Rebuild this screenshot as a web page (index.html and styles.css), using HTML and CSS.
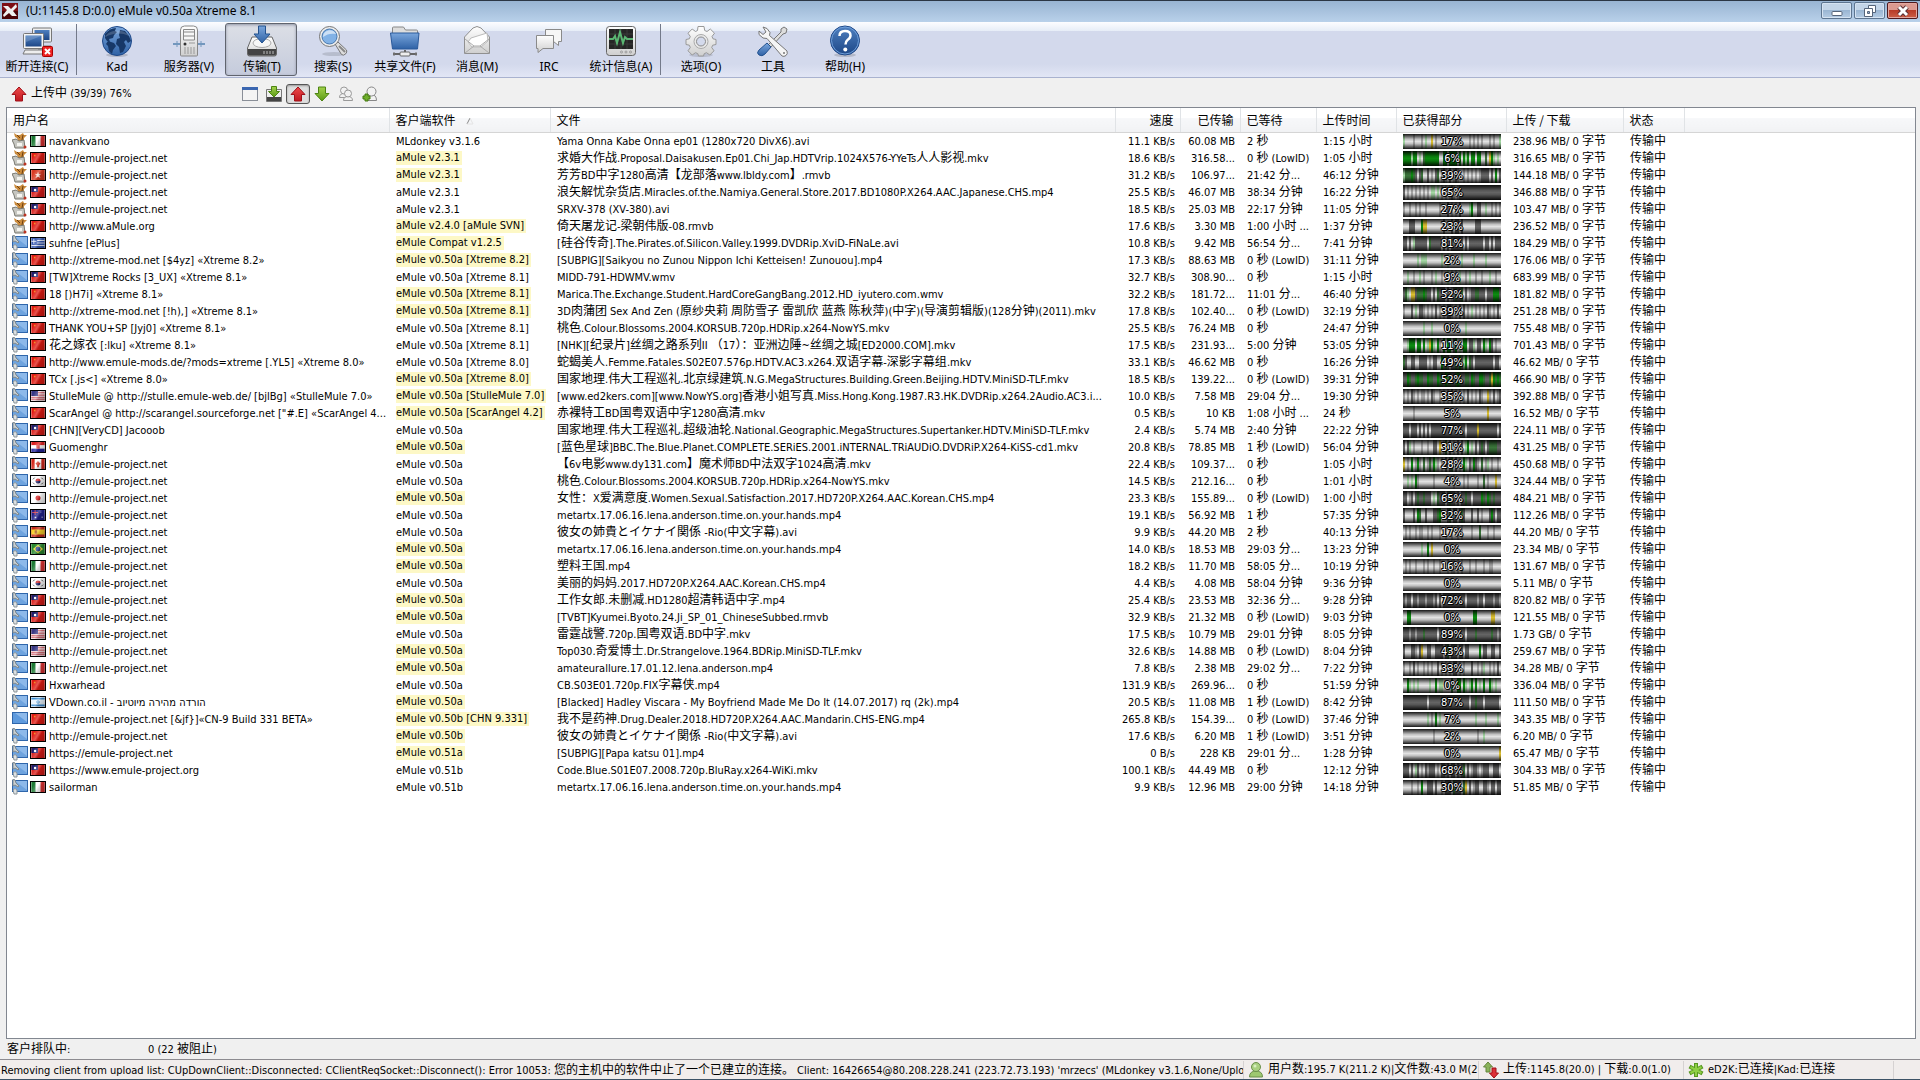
FILE: index.html
```html
<!DOCTYPE html>
<html lang="zh-CN">
<head>
    <meta charset="UTF-8">
    <meta name="viewport" content="width=device-width, initial-scale=1.0">
    <title>eMule v0.50a Xtreme 8.1</title>
    <link rel="stylesheet" href="styles.css">
</head>
<body>

    <svg class="sprite" width="0" height="0" aria-hidden="true">
        <defs>
            <linearGradient id="blue" x1="0" y1="0" x2="0" y2="1"><stop offset="0" stop-color="#7aa6dc"/><stop offset="1" stop-color="#2f62a6"/></linearGradient>
            <linearGradient id="deep" x1="0" y1="0" x2="0" y2="1"><stop offset="0" stop-color="#4f80c0"/><stop offset="1" stop-color="#1d4787"/></linearGradient>
            <linearGradient id="grey" x1="0" y1="0" x2="0" y2="1"><stop offset="0" stop-color="#ffffff"/><stop offset="1" stop-color="#cfcfcf"/></linearGradient>
            <linearGradient id="green" x1="0" y1="0" x2="0" y2="1"><stop offset="0" stop-color="#a3d24c"/><stop offset="1" stop-color="#5a9a14"/></linearGradient>
            <linearGradient id="red" x1="0" y1="0" x2="0" y2="1"><stop offset="0" stop-color="#ee4a4a"/><stop offset="1" stop-color="#c01820"/></linearGradient>
        </defs>

        <symbol id="i-disconnect" viewBox="0 0 32 32">
            <path d="M12 21h18l1 3H11z" fill="#ddd" stroke="#777"/>
            <rect x="11.500" y="3" width="19" height="14" rx="1" fill="#eee" stroke="#777"/>
            <rect x="13.500" y="5" width="15" height="10" fill="url(#deep)"/>
            <path d="M4 25h18l2 4H2z" fill="#eee" stroke="#777"/>
            <path d="M9 22h8v3H9z" fill="#aaa"/>
            <rect x="2.500" y="8.500" width="20" height="15" rx="1" fill="#f4f4f4" stroke="#777"/>
            <rect x="4.500" y="10.500" width="16" height="11" fill="url(#deep)"/>
            <path d="M5 11h15L5 17z" fill="#fff" opacity=".18"/>
            <rect x="21.500" y="21.500" width="10" height="10" rx="1" fill="#e22" stroke="#a00"/>
            <path d="M24 24l5 5m0-5l-5 5" stroke="#fff" stroke-width="2"/>
        </symbol>
        <symbol id="i-kad" viewBox="0 0 32 32">
            <ellipse cx="16" cy="30" rx="11" ry="2" fill="#000" opacity=".15"/>
            <circle cx="16" cy="16" r="14.500" fill="url(#blue)" stroke="#1d4787"/>
            <path d="M4 9c3-4 7-6 11-6l-1 3 2 1-3 3-1 3-4 1 1 3-3-1-2-3zM7 16l6 2 2 3-3 4-1 4-3-3-1-5-2-2zM19 5l5 1 4 5 2 5-3 2-2-3-2 2 2 4-3 6-3 1-1-6-3-3 1-5 3-1-1-3z" fill="#173868"/>
            <path d="M4 12C8 4 23 3 28 11c-8-4-16-3-24 1z" fill="#fff" opacity=".18"/>
        </symbol>
        <symbol id="i-server" viewBox="0 0 32 32">
            <path d="M0 19h32" stroke="#7397bd" stroke-width="2"/>
            <path d="M4 16v6M28 16v6" stroke="#7397bd"/>
            <path d="M7.500 30V5q0-4 4-4h9q4 0 4 4v25q0 1-1 1h-15q-1 0-1-1z" fill="url(#grey)" stroke="#888"/>
            <path d="M10.500 7V4.500h11V15h-11V7h11M10.500 11h11" fill="#f6f6f6" stroke="#888"/>
            <circle cx="12" cy="19" r="1.500" fill="#333"/>
            <path d="M16 18h6M12 22v7M15 22v7M18 22v7M21 22v7" stroke="#999"/>
        </symbol>
        <symbol id="i-transfer" viewBox="0 0 32 32">
            <path d="M1.500 23L6 12h20l4.500 11v6q0 2-2 2h-25q-2 0-2-2z" fill="url(#grey)" stroke="#666"/>
            <ellipse cx="16" cy="18" rx="9" ry="4.500" fill="#f7f7f7" stroke="#aaa"/>
            <path d="M2 24h28v5q0 1.500-1.500 1.500h-25Q2 30.500 2 29z" fill="#444"/>
            <path d="M18 26v3M21 26v3M24 26v3M27 26v3" stroke="#bbb"/>
            <path d="M12.500 1h7v8h4.500l-8 9-8-9h4.500z" fill="url(#blue)" stroke="#23528f"/>
        </symbol>
        <symbol id="i-search" viewBox="0 0 32 32">
            <ellipse cx="17" cy="29" rx="12" ry="2" fill="#000" opacity=".13"/>
            <path d="M18 19l3-2 8.500 8q1 2-1 4t-4 .5z" fill="#ddd" stroke="#777"/>
            <path d="M22 21l6 6" stroke="#888" stroke-width="2"/>
            <circle cx="12.500" cy="11.500" r="10" fill="#eee" stroke="#777"/>
            <circle cx="12.500" cy="11.500" r="7.500" fill="#82b2e6" stroke="#4677ae"/>
            <path d="M6 12c0-8 11-9 13-3-5-1-9 0-13 3z" fill="#fff" opacity=".6"/>
        </symbol>
        <symbol id="i-shared" viewBox="0 0 32 32">
            <path d="M3.500 10V3q0-1 1-1h10l2 3h11q1 0 1 1v5z" fill="#ddd" stroke="#888"/>
            <path d="M1.500 8h28.500l-1.500 16h-25z" fill="url(#blue)" stroke="#2b5a9b"/>
            <path d="M4 29h24M16 25v3" stroke="#666" stroke-width="2"/>
            <rect x="11" y="27" width="10" height="4" rx="1" fill="#eee" stroke="#666"/>
            <path d="M5 27v4M27 27v4" stroke="#777"/>
        </symbol>
        <symbol id="i-mail" viewBox="0 0 32 32">
            <path d="M3.500 28.500V12L12 3q4-3 8 0l8.500 9v16.500z" fill="url(#grey)" stroke="#909090"/>
            <path d="M7 17l3-4 16-5 1 8-7 6H11z" fill="#fff" stroke="#bbb"/>
            <path d="M4 14l9 7h6l9-7M4 28l9-7M28 28l-9-7" fill="none" stroke="#aaa"/>
        </symbol>
        <symbol id="i-irc" viewBox="0 0 32 32">
            <path d="M12.500 4.500h16v12h-3v4l-5-4h-8z" fill="#f6f6f6" stroke="#8a8a8a"/>
            <path d="M3.500 10.500h17v13H10l-5 4v-4H3.500z" fill="url(#grey)" stroke="#8a8a8a"/>
        </symbol>
        <symbol id="i-stats" viewBox="0 0 32 32">
            <rect x="1.500" y="1.500" width="29" height="29" rx="3" fill="url(#grey)" stroke="#666"/>
            <rect x="4" y="4" width="24" height="20" fill="#252525"/>
            <path d="M4 9h24M4 14h24M4 19h24M10 4v20M16 4v20M22 4v20" stroke="#3b3b3b"/>
            <path d="M4 14h4l2-3 2 7 3-11 3 11 2-6 2 2h6" fill="none" stroke="#5ab572" stroke-width="2"/>
            <g fill="#ddd" stroke="#999"><circle cx="16.500" cy="27" r="1"/><circle cx="21" cy="27" r="1"/><circle cx="25.500" cy="27" r="1"/></g>
        </symbol>
        <symbol id="i-options" viewBox="0 0 32 32">
            <ellipse cx="16" cy="30" rx="12" ry="2" fill="#000" opacity=".12"/>
            <path d="M13 1.500h6l.7 4 2.300 1 3.300-2.500 4.200 4.200-2.500 3.300 1 2.300 3 .7v5l-3.300.7-1 2.300 2.300 3.300-4.200 4.200-3.300-2.300-2.300 1-.7 2.300h-5l-.7-2.300-2.300-1-3.300 2.300-4.200-4.200 2.300-3.300-1-2.300-3.300-.7v-5l3.300-.7 1-2.300L3 8.200 7.200 4l3.300 2.500 2-1z" fill="url(#grey)" stroke="#999"/>
            <circle cx="16" cy="16.500" r="7" fill="#e8e8e8" stroke="#aaa"/>
            <circle cx="16" cy="16.500" r="4.500" fill="#d4daec" stroke="#8b8b8b"/>
        </symbol>
        <symbol id="i-tools" viewBox="0 0 32 32">
            <path d="M27 2l3 2-1 4-3 1-12 13-3-2L24 7V4z" fill="#ddd" stroke="#777"/>
            <path d="M10 18l4 4-6 7q-3 3-6 1t0-5z" fill="url(#blue)" stroke="#23528f"/>
            <path d="M6 2l4 1.500 3 4-.5 3L30 26q1 3-1 4.500t-4 .5L10 13.500 6 13 2 9.500V6l4 3.500L9 7z" fill="#f5f5f5" stroke="#777"/>
            <circle cx="27" cy="28" r="1" fill="#777"/>
        </symbol>
        <symbol id="i-help" viewBox="0 0 32 32">
            <ellipse cx="16" cy="30" rx="11" ry="2" fill="#000" opacity=".15"/>
            <circle cx="16" cy="15.500" r="14.500" fill="url(#deep)" stroke="#1d4787"/>
            <circle cx="16" cy="15.500" r="13.500" fill="none" stroke="#6f9fda"/>
            <path d="M10.500 11q0-5 5.500-5t5.500 4.500q0 2.500-3 4.500-2 1.500-2 4.500" fill="none" stroke="#fff" stroke-width="2.500"/>
            <circle cx="16.300" cy="24.500" r="2" fill="#fff"/>
        </symbol>

        <symbol id="i-up" viewBox="0 0 16 16"><path d="M8 1l7 7.500h-3.500V15h-7V8.500H1z" fill="url(#red)" stroke="#a01018"/></symbol>
        <symbol id="i-down" viewBox="0 0 16 16"><path d="M8 15L1 7.500h3.500V1h7v6.500H15z" fill="url(#green)" stroke="#4d8412"/></symbol>
        <symbol id="i-window" viewBox="0 0 16 16"><rect x=".5" y="1.500" width="15" height="13" fill="#f4f4f4" stroke="#8a8f98"/><path d="M0 1h16v3H0z" fill="#3a66b0"/></symbol>
        <symbol id="i-tray" viewBox="0 0 16 16"><path d="M.5 3.500h15v12H.5z" fill="#eee" stroke="#777"/><path d="M1 11h14v4H1z" fill="#444"/><path d="M8 11L2.500 5.500h3V.5h5v5h3z" fill="url(#green)" stroke="#4d8412"/></symbol>
        <symbol id="i-people" viewBox="0 0 16 16"><g fill="#f2f2f2" stroke="#999"><path d="M1.500 11.500q0-4 4.500-4t4.500 4z"/><circle cx="6" cy="4.500" r="3.500"/><path d="M5.500 14.500q0-4 4.500-4t4.500 4z"/><circle cx="10" cy="7.500" r="3.500"/></g></symbol>
        <symbol id="i-known" viewBox="0 0 16 16"><g fill="#f2f2f2" stroke="#888"><path d="M3.500 14.500q0-6 5.500-6t5.500 6z"/><circle cx="9.500" cy="5.500" r="4.500"/></g><path d="M1 10h2V8h3v2h2v3H6v2H3v-2H1z" fill="#6fae2b" stroke="#457a10"/></symbol>
        <symbol id="i-user" viewBox="0 0 16 16"><path d="M1.500 15q0-6 6.500-6t6.500 6z" fill="#9dc870" stroke="#6b8f4b"/><circle cx="8" cy="5" r="4.500" fill="#a9d080" stroke="#6b8f4b"/><circle cx="7" cy="4" r="1.500" fill="#d8efc0"/></symbol>
        <symbol id="i-updown" viewBox="0 0 16 16"><path d="M5 0l4.500 5H7v5H3V5H.5z" fill="#8ab25a" stroke="#64863c"/><path d="M11 16l-4.500-5H9V6h4v5h2.500z" fill="#dd3038" stroke="#a01018"/></symbol>
        <symbol id="i-net" viewBox="0 0 16 16"><path d="M8 1v14M1.500 4.500l13 7M14.500 4.500l-13 7" stroke="#57971f" stroke-width="4"/><path d="M8 2v12M2.500 5l11 6M13.500 5l-11 6" stroke="#8fcf45" stroke-width="2"/></symbol>

        <symbol id="c-mule" viewBox="0 0 16 16">
            <path d="M2 0l3 2h3l3-2 1 2 3 0-3 3v3H6L5 5 3 4z" fill="#c98a3c"/>
            <path d="M5 2l3 3M11 2l-1 5" stroke="#6d3e10"/>
            <path d="M0 7l4-1 3 2 5-1 1 8H3l-1-4z" fill="#c6c6c0" stroke="#77776f"/>
            <path d="M5 10h5v3H5z" fill="#f5f5f0"/>
            <circle cx="13" cy="14" r="1.500" fill="#b32"/>
        </symbol>
        <symbol id="c-emule" viewBox="0 0 16 16">
            <rect x=".5" y="1.500" width="15" height="11" fill="#6ea3de" stroke="#2f66ab"/>
            <path d="M3 2l12 0v9z" fill="#8db9ea"/>
            <path d="M1 0l2 1 1 3 3 3-1 1-3-2-2 1z" fill="#c9d0d4" stroke="#7e888d"/>
            <path d="M1 11q2-3 4 0v4H2z" fill="#dde1e3" stroke="#8b9499"/>
        </symbol>
        <symbol id="c-plain" viewBox="0 0 16 16">
            <rect x=".5" y="1.500" width="15" height="11" fill="#5e9add" stroke="#2f66ab"/>
            <path d="M3 2l12 0v9z" fill="#8db9ea"/>
        </symbol>

        <symbol id="f-it" viewBox="0 0 16 12"><path d="M0 0h16v12H0z" fill="#fff"/><path d="M0 0h5v12H0z" fill="#1d7a34"/><path d="M11 0h5v12h-5z" fill="#d33"/></symbol>
        <symbol id="f-cn" viewBox="0 0 16 12"><path d="M0 0h16v12H0z" fill="#df1a12"/><path d="M3 2h2v2H3z" fill="#f08a20"/></symbol>
        <symbol id="f-hk" viewBox="0 0 16 12"><path d="M0 0h16v12H0z" fill="#d93a22"/><path d="M8 2l1 3 3-.5-2.500 2L11 9.500 8 8 5 9.500l1.500-3L4 4.500l3 .5z" fill="#ffe8e0"/></symbol>
        <symbol id="f-tw" viewBox="0 0 16 12"><path d="M0 0h16v12H0z" fill="#d81c18"/><path d="M0 0h8v6H0z" fill="#20206c"/><circle cx="4.500" cy="3.500" r="1.500" fill="#fff"/></symbol>
        <symbol id="f-gr" viewBox="0 0 16 12"><path d="M0 0h16v12H0z" fill="#3658b0"/><path d="M7 3h9M7 6h9M0 9h16M0 4h6M3 1v6" stroke="#fff"/></symbol>
        <symbol id="f-us" viewBox="0 0 16 12"><path d="M0 0h16v12H0z" fill="#f0d4d8"/><path d="M0 2h16M0 5h16M0 8h16M0 10h16" stroke="#c7404c"/><path d="M0 0h8v6H0z" fill="#383884"/></symbol>
        <symbol id="f-hr" viewBox="0 0 16 12"><path d="M0 0h16v4H0z" fill="#d22"/><path d="M0 4h16v4H0z" fill="#fff"/><path d="M0 8h16v4H0z" fill="#229"/><path d="M6 3h4v5H6z" fill="#d44"/></symbol>
        <symbol id="f-ca" viewBox="0 0 16 12"><path d="M0 0h16v12H0z" fill="#fff"/><path d="M0 0h4v12H0zM12 0h4v12h-4zM8 2l1 2 2 1-2 3v2H7V8L5 5l2-1z" fill="#d52b1e"/></symbol>
        <symbol id="f-kr" viewBox="0 0 16 12"><path d="M0 0h16v12H0z" fill="#fff"/><path d="M5 6a3 3 0 016 0z" fill="#c22"/><path d="M5 6a3 3 0 006 0z" fill="#226"/><path d="M2 4l2-2M12 2l2 2M2 8l2 2M12 10l2-2" stroke="#333"/></symbol>
        <symbol id="f-jp" viewBox="0 0 16 12"><path d="M0 0h16v12H0z" fill="#fff"/><circle cx="8" cy="6" r="3" fill="#d32020"/></symbol>
        <symbol id="f-au" viewBox="0 0 16 12"><path d="M0 0h16v12H0z" fill="#20208a"/><path d="M1 3h7M4.500 0v6" stroke="#e55"/><path d="M4 8h2v2H4zM11 2h1v1h-1zM12 8h2v1h-2z" fill="#dde"/></symbol>
        <symbol id="f-es" viewBox="0 0 16 12"><path d="M0 0h16v12H0z" fill="#c22b1c"/><path d="M0 3h16v6H0z" fill="#f5cf28"/><path d="M4 4h3v4H4z" fill="#a85a18"/></symbol>
        <symbol id="f-br" viewBox="0 0 16 12"><path d="M0 0h16v12H0z" fill="#2a8830"/><path d="M8 1l6 5-6 5-6-5z" fill="#f1e13a"/><circle cx="8" cy="6" r="3" fill="#24408c"/></symbol>
        <symbol id="f-il" viewBox="0 0 16 12"><path d="M0 0h16v12H0z" fill="#eaf5ff"/><path d="M0 2h16M0 10h16" stroke="#3a8bd0" stroke-width="2"/><circle cx="8" cy="6" r="1.500" fill="none" stroke="#3a8bd0"/></symbol>
    </svg>

    <header class="titlebar">
        <svg class="app-icon" viewBox="0 0 16 16" aria-hidden="true">
            <path d="M0 0h16v16H0z" fill="#7c0e14"/><path d="M0 8h16v8H0z" fill="#4c0408"/>
            <path d="M1 3l5 0 3 3 5-5 1 3-4 4 4 5h-5l-3-3-5 4-1-2 4-5z" fill="#f0f0f0"/>
        </svg>
        <h1>(U:1145.8 D:0.0) eMule v0.50a Xtreme 8.1</h1>
        <div class="window-buttons">
            <button type="button" aria-label="最小化"><svg viewBox="0 0 16 12"><rect x="3" y="6.500" width="10" height="4" rx="1" fill="#fff" stroke="#56657a"/></svg></button>
            <button type="button" aria-label="还原"><svg viewBox="0 0 16 12"><path d="M6.500.5h7v7h-7z" fill="#fff" stroke="#56657a"/><path d="M2.500 3.500h8v8h-8z" fill="#fff" stroke="#56657a"/><path d="M5.500 6.500h2v2h-2z" fill="#8cabcf" stroke="#56657a"/></svg></button>
            <button type="button" class="close" aria-label="关闭"><svg viewBox="0 0 16 12"><path d="M4 2l8 8m0-8l-8 8" stroke="#5b2f33" stroke-width="5"/><path d="M4 2l8 8m0-8l-8 8" stroke="#fff" stroke-width="3"/></svg></button>
        </div>
    </header>

    <nav class="toolbar">
        <button type="button"><svg><use href="#i-disconnect"/></svg>断开连接(C)</button>
        <span class="sep"></span>
        <button type="button"><svg><use href="#i-kad"/></svg>Kad</button>
        <button type="button"><svg><use href="#i-server"/></svg>服务器(V)</button>
        <button type="button" class="active"><svg><use href="#i-transfer"/></svg>传输(T)</button>
        <button type="button"><svg><use href="#i-search"/></svg>搜索(S)</button>
        <button type="button"><svg><use href="#i-shared"/></svg>共享文件(F)</button>
        <button type="button"><svg><use href="#i-mail"/></svg>消息(M)</button>
        <button type="button"><svg><use href="#i-irc"/></svg>IRC</button>
        <button type="button"><svg><use href="#i-stats"/></svg>统计信息(A)</button>
        <span class="sep"></span>
        <button type="button"><svg><use href="#i-options"/></svg>选项(O)</button>
        <button type="button"><svg><use href="#i-tools"/></svg>工具</button>
        <button type="button"><svg><use href="#i-help"/></svg>帮助(H)</button>
    </nav>

    <div class="subbar">
        <svg><use href="#i-up"/></svg>
        <h2><span class="cjk">上传中</span> (39/39) 76%</h2>
        <div class="views">
            <button type="button" aria-label="拆分窗口"><svg><use href="#i-window"/></svg></button>
            <button type="button" aria-label="下载列表"><svg><use href="#i-tray"/></svg></button>
            <button type="button" class="active" aria-label="上传中"><svg><use href="#i-up"/></svg></button>
            <button type="button" aria-label="下载中"><svg><use href="#i-down"/></svg></button>
            <button type="button" aria-label="排队中"><svg><use href="#i-people"/></svg></button>
            <button type="button" aria-label="已知用户"><svg><use href="#i-known"/></svg></button>
        </div>
    </div>

    <main class="list">
        <table>
            <colgroup>
                <col class="c-user"><col class="c-soft"><col class="c-file"><col class="c-speed"><col class="c-sent">
                <col class="c-wait"><col class="c-time"><col class="c-parts"><col class="c-total"><col class="c-state"><col>
            </colgroup>
            <thead>
                <tr>
                    <th>用户名</th>
                    <th>客户端软件 <svg class="sort" viewBox="0 0 8 8"><path d="M1 7l3-6" stroke="#888"/><path d="M4 1l3 6H1" fill="none" stroke="#e4e4e4"/></svg></th>
                    <th>文件</th>
                    <th class="num">速度</th>
                    <th class="num">已传输</th>
                    <th>已等待</th>
                    <th>上传时间</th>
                    <th>已获得部分</th>
                    <th>上传 / 下载</th>
                    <th>状态</th>
                    <th></th>
                </tr>
            </thead>
            <tbody id="uploads"></tbody>
        </table>
    </main>

    <div class="queue">
        <span><span class="cjk">客户排队中</span>:</span>
        <span>0 (22 <span class="cjk">被阻止</span>)</span>
    </div>

    <footer class="statusbar">
        <div class="log">Removing client from upload list: CUpDownClient::Disconnected: CClientReqSocket::Disconnect(): Error 10053: <span class="cjk">您的主机中的软件中止了一个已建立的连接。</span> Client: 16426654@80.208.228.241 (223.72.73.193) 'mrzecs' (MLdonkey v3.1.6,None/Uploading,</div>
        <div class="users"><svg><use href="#i-user"/></svg><span><span class="cjk">用户数</span>:195.7 K(211.2 K)|<span class="cjk">文件数</span>:43.0 M(2</span></div>
        <div class="rates"><svg><use href="#i-updown"/></svg><span><span class="cjk">上传</span>:1145.8(20.0) | <span class="cjk">下载</span>:0.0(1.0)</span></div>
        <div class="net"><svg><use href="#i-net"/></svg><span>eD2K:<span class="cjk">已连接</span>|Kad:<span class="cjk">已连接</span></span></div>
        <div class="grip"></div>
    </footer>

    <script src="script.js"></script>
</body>
</html>
```

FILE: styles.css
```css
* {
    box-sizing: border-box;
}
body {
    margin: 0;
    min-height: 100vh;
    display: flex;
    flex-direction: column;
    background-color: #f0f0f0;
    color: #000;
    font-family: "DejaVu Sans Condensed", "Noto Sans CJK SC", sans-serif;
    font-size: 11px;
    line-height: 16px;
}
h1, h2 {
    margin: 0;
    font-weight: normal;
}
button {
    font: inherit;
    color: inherit;
    padding: 0;
    border: 1px solid transparent;
    background: none;
}
.sprite {
    position: absolute;
}
.cjk {
    font-family: "Noto Sans CJK SC", sans-serif;
    font-size: 12px;
    line-height: 12px;
}

/* title bar */
.titlebar {
    display: flex;
    align-items: center;
    height: 22px;
    padding: 0 2px 2px;
    border-top: 1px solid #2b3644;
    background: linear-gradient(#98b4d2, #b9d1ea);
}
.titlebar h1 {
    flex: 1;
    margin-left: 8px;
    font-family: "Noto Sans", sans-serif;
    font-size: 12px;
}
.app-icon {
    width: 16px;
    height: 16px;
}
.window-buttons {
    display: flex;
    gap: 2px;
}
.window-buttons button {
    display: flex;
    align-items: center;
    justify-content: center;
    width: 31px;
    height: 17px;
    border: 1px solid #5d7590;
    border-radius: 2px;
    box-shadow: inset 0 0 0 1px #d5e3f2;
    background: linear-gradient(#c3d5e8 50%, #9ab6d3 50%, #b5cce4);
}
.window-buttons .close {
    border-color: #50191c;
    box-shadow: inset 0 0 0 1px #e3a79f;
    background: linear-gradient(#dc9a90 50%, #b83c28 50%, #cc6048);
}
.window-buttons svg {
    width: 16px;
    height: 12px;
}

/* toolbar */
.toolbar {
    display: flex;
    height: 56px;
    padding: 1px;
    border-bottom: 1px solid #a9b2cf;
    background: linear-gradient(#fdfdff, #e6edf7 9px, #d3d9ec 9px, #d3d9ec 42px, #e2e6f5);
}
.toolbar button {
    display: flex;
    flex-direction: column;
    align-items: center;
    width: 72px;
    border-radius: 3px;
    font-family: "Noto Sans", "Noto Sans CJK SC", sans-serif;
    font-size: 12px;
    white-space: nowrap;
}
.toolbar svg {
    width: 32px;
    height: 32px;
    margin: 1px 0 2px;
}
.toolbar .active {
    padding-left: 2px;
    border-color: #60646e;
    background: linear-gradient(#dcdfe6, #c5cbdc);
    box-shadow: inset 0 1px 3px #8f95a5;
}
.sep {
    width: 1px;
    margin: 1px 4px 1px 3px;
    background-color: #747a8a;
}

/* small bar above the list */
.subbar {
    display: flex;
    align-items: center;
    height: 29px;
    padding: 2px 11px 0;
}
.subbar svg {
    width: 16px;
    height: 16px;
}
.subbar h2 {
    width: 211px;
    padding-left: 4px;
    font-size: 11px;
}
.views {
    display: flex;
}
.views button {
    display: flex;
    align-items: center;
    justify-content: center;
    width: 24px;
    height: 20px;
}
.views .active {
    border-color: #555;
    border-radius: 3px;
    background-color: #dedede;
    box-shadow: inset 0 1px 2px #999;
}

/* upload list */
.list {
    flex: 1;
    margin: 0 4px 0 6px;
    border: 1px solid #828790;
    background-color: #fff;
}
table {
    width: 100%;
    table-layout: fixed;
    border-collapse: collapse;
}
.c-user { width: 382px; }
.c-soft { width: 161px; }
.c-file { width: 565px; }
.c-speed { width: 65px; }
.c-sent { width: 60px; }
.c-wait { width: 76px; }
.c-time { width: 80px; }
.c-parts { width: 110px; }
.c-total { width: 117px; }
.c-state { width: 61px; }
th {
    height: 24px;
    padding: 0 6px;
    border-right: 1px solid #e0e3e6;
    border-bottom: 1px solid #d5d5d5;
    background: linear-gradient(#fff 40%, #f7f8fa 40%, #f1f2f4);
    font-family: "Noto Sans CJK SC", sans-serif;
    font-size: 12px;
    font-weight: normal;
    text-align: left;
    white-space: nowrap;
}
th:last-child {
    border-right: none;
}
.sort {
    width: 8px;
    height: 8px;
    margin-left: 8px;
}
td {
    height: 17px;
    padding: 0 5px 0 7px;
    line-height: 15px;
    white-space: nowrap;
}
.num {
    text-align: right;
}
.user {
    display: flex;
    align-items: center;
    height: 17px;
    padding: 0 5px;
}
.client {
    flex: none;
    width: 16px;
    height: 16px;
    margin-right: 2px;
}
.flag {
    position: relative;
    display: flex;
    flex: none;
    width: 16px;
    height: 12px;
    margin-right: 3px;
    border: 1px solid #000;
}
.flag svg {
    width: 14px;
    height: 10px;
}
.flag::after {
    content: "";
    position: absolute;
    inset: 0;
    background: linear-gradient(120deg, transparent 20%, rgba(255, 255, 255, .25) 45%, rgba(0, 0, 0, .15) 60%, rgba(0, 0, 0, .3));
}
mark {
    display: block;
    width: fit-content;
    height: 14px;
    line-height: 14px;
    padding-right: 2px;
    background-color: #fdf8c6;
}
.bar {
    position: relative;
    height: 15px;
    line-height: 15px;
    color: #fff;
    text-align: center;
    text-shadow: 1px 0 #000, -1px 0 #000, 0 1px #000, 0 -1px #000, 1px 1px #000, -1px -1px #000;
}
.bar::before {
    content: "";
    position: absolute;
    inset: 0;
    background: linear-gradient(rgba(0, 0, 0, .9), rgba(0, 0, 0, .15) 35%, transparent 50%, rgba(0, 0, 0, .15) 65%, rgba(0, 0, 0, .9));
}
.bar span {
    position: relative;
}

/* queue line and status bar */
.queue {
    display: flex;
    align-items: center;
    height: 20px;
    padding: 1px 7px 0;
}
.queue > span:first-child {
    width: 141px;
}
.statusbar {
    display: flex;
    height: 21px;
    padding-top: 1px;
    border-top: 1px solid #8c8b90;
    border-bottom: 1px solid #3d5266;
    background-color: #f1edec;
}
.statusbar div {
    display: flex;
    align-items: center;
    padding-left: 4px;
    border-right: 1px solid #d6d2d2;
    white-space: nowrap;
}
.statusbar .log {
    flex: 1;
    display: block;
    padding-left: 1px;
    line-height: 19px;
    overflow: hidden;
}
.statusbar svg {
    flex: none;
    width: 16px;
    height: 16px;
    margin-right: 4px;
}
.statusbar .users { width: 235px; }
.statusbar .rates { width: 205px; }
.statusbar .net { width: 210px; }
.statusbar .grip { width: 26px; border-right: none; }
```

FILE: script.js
```js
// client icon, flag, user, software, highlighted, file, speed, sent, waited, upload time, percent, total, parts
const uploads = [
    ["mule", "it", "navankvano", "MLdonkey v3.1.6", 0, "Yama Onna Kabe Onna ep01 (1280x720 DivX6).avi", "11.1 KB/s", "60.08 MB", "2 秒", "1:15 小时", 17, "238.96 MB", "e....m...m.e..y.m................m.m.m.m...m.m..e"],
    ["mule", "cn", "http://emule-project.net", "aMule v2.3.1", 1, "求婚大作战.Proposal.Daisakusen.Ep01.Chi_Jap.HDTVrip.1024X576-YYeTs人人影视.mkv", "18.6 KB/s", "316.58...", "0 秒 (LowID)", "1:05 小时", 6, "316.65 MB", "ggggegg.e.hggggggg..gg.gggg.g.geg.gg.gg..h.yge.e."],
    ["mule", "hk", "http://emule-project.net", "aMule v2.3.1", 1, "芳芳BD中字1280高清【龙部落www.lbldy.com】.rmvb", "31.2 KB/s", "106.97...", "21:42 分...", "46:12 分钟", 39, "144.18 MB", "ehhhghd.dh..d.m.dh.mdm.d.mdm..m.m.m.m.mdddd.d.g.d"],
    ["mule", "tw", "http://emule-project.net", "aMule v2.3.1", 0, "浪矢解忧杂货店.Miracles.of.the.Namiya.General.Store.2017.BD1080P.X264.AAC.Japanese.CHS.mp4", "25.5 KB/s", "46.07 MB", "38:34 分钟", "16:22 分钟", 65, "346.88 MB", "d.m.m.m.m.m.m.ee.e.m.m.mdm.mddddddddddddddddddddd"],
    ["mule", "tw", "http://emule-project.net", "aMule v2.3.1", 0, "SRXV-378 (XV-380).avi", "18.5 KB/s", "25.03 MB", "22:17 分钟", "11:05 分钟", 27, "103.47 MB", "m..m..m.m..m......m...d.m.m.d....eg..dd..e..m.m.m"],
    ["mule", "cn", "http://www.aMule.org", "aMule v2.4.0 [aMule SVN]", 1, "倚天屠龙记-梁朝伟版-08.rmvb", "17.6 KB/s", "3.30 MB", "1:00 小时 ...", "1:37 分钟", 23, "236.52 MB", "...ddd...gyy........d...d.dd.d......ddd.........."],
    ["emule", "gr", "suhfne [ePlus]", "eMule Compat v1.2.5", 1, "[硅谷传奇].The.Pirates.of.Silicon.Valley.1999.DVDRip.XviD-FiNaLe.avi", "10.8 KB/s", "9.42 MB", "56:54 分...", "7:41 分钟", 81, "184.29 MB", "dd.d.edddddd.hddddd.d.d.dddddd.d.ddddddd.dd.d.ddd"],
    ["emule", "cn", "http://xtreme-mod.net [$4yz] «Xtreme 8.2»", "eMule v0.50a [Xtreme 8.2]", 1, "[SUBPIG][Saikyou no Zunou Nippon Ichi Ketteisen! Zunouou].mp4", "17.3 KB/s", "88.63 MB", "0 秒 (LowID)", "31:11 分钟", 2, "176.06 MB", ".......e.eee.......e..e......e.....e.....e......."],
    ["emule", "tw", "[TW]Xtreme Rocks [3_UX] «Xtreme 8.1»", "eMule v0.50a [Xtreme 8.1]", 0, "MIDD-791-HDWMV.wmv", "32.7 KB/s", "308.90...", "0 秒", "1:15 小时", 9, "683.99 MB", "..e..m..e.m...m.e..m..e.m.m.e..m.e..m..m...e..m.."],
    ["emule", "cn", "18 [)H7i] «Xtreme 8.1»", "eMule v0.50a [Xtreme 8.1]", 1, "Marica.The.Exchange.Student.HardCoreGangBang.2012.HD_iyutero.com.wmv", "32.2 KB/s", "181.72...", "11:01 分...", "46:40 分钟", 52, "181.82 MB", "dhe.yydhhhghdd.d.hddd.d.mdhddh.d.mddhhddd.dddgggd"],
    ["emule", "cn", "http://xtreme-mod.net [!h),] «Xtreme 8.1»", "eMule v0.50a [Xtreme 8.1]", 1, "3D肉蒲团 Sex And Zen (原纱央莉 周防雪子 雷凯欣 蓝燕 陈秋萍)(中字)(导演剪辑版)(128分钟)(2011).mkv", "17.8 KB/s", "102.40...", "0 秒 (LowID)", "32:19 分钟", 39, "251.28 MB", "m...d.e.ddm.m.m.d.m.m.ddm.m.d.d.m.e.m.m.m.dm.m.d."],
    ["emule", "cn", "THANK YOU+SP [Jyj0] «Xtreme 8.1»", "eMule v0.50a [Xtreme 8.1]", 0, "桃色.Colour.Blossoms.2004.KORSUB.720p.HDRip.x264-NowYS.mkv", "25.5 KB/s", "76.24 MB", "0 秒", "24:47 分钟", 0, "755.48 MB", "..........e...e................e................."],
    ["emule", "cn", "花之嫁衣 [:lku] «Xtreme 8.1»", "eMule v0.50a [Xtreme 8.1]", 0, "[NHK][纪录片]丝绸之路系列II （17）：亚洲边陲~丝绸之城[ED2000.COM].mkv", "17.5 KB/s", "231.93...", "5:00 分钟", "53:05 分钟", 11, "701.43 MB", "..eggg.gg.g.eyge.gm.g.gg.dg.e.gg.dde.dd.ge.gd.m.."],
    ["emule", "cn", "http://www.emule-mods.de/?mods=xtreme [.YL5] «Xtreme 8.0»", "eMule v0.50a [Xtreme 8.0]", 0, "蛇蝎美人.Femme.Fatales.S02E07.576p.HDTV.AC3.x264.双语字幕-深影字幕组.mkv", "33.1 KB/s", "46.62 MB", "0 秒", "16:26 分钟", 49, "46.62 MB", "hd..dd..dddd.m.dd..gdhd.ddhdgdeg.hd.ddddddddd.dd."],
    ["emule", "cn", "TCx [.js<] «Xtreme 8.0»", "eMule v0.50a [Xtreme 8.0]", 1, "国家地理.伟大工程巡礼.北京绿建筑.N.G.MegaStructures.Building.Green.Beijing.HDTV.MiniSD-TLF.mkv", "18.5 KB/s", "139.22...", "0 秒 (LowID)", "39:31 分钟", 52, "466.90 MB", "ddghddhghhddghhddghhdghhddhghddhhdghddgghddhyghgh"],
    ["emule", "us", "StulleMule @ http://stulle.emule-web.de/ [bjlBg] «StulleMule 7.0»", "eMule v0.50a [StulleMule 7.0]", 1, "[www.ed2kers.com][www.NowYS.org]香港小姐写真.Miss.Hong.Kong.1987.R3.HK.DVDRip.x264.2Audio.AC3.i...", "10.0 KB/s", "7.58 MB", "29:04 分...", "19:30 分钟", 35, "392.88 MB", "m.m.dm.m.mm.m.dm..m.m.m.d.m.m.m.d.m.m.dm..ym.d.md"],
    ["emule", "cn", "ScarAngel @ http://scarangel.sourceforge.net [\"#.E] «ScarAngel 4...", "eMule v0.50a [ScarAngel 4.2]", 1, "赤裸特工BD国粤双语中字1280高清.mkv", "0.5 KB/s", "10 KB", "1:08 小时 ...", "24 秒", 5, "16.52 MB", ".....m....................................y......"],
    ["emule", "tw", "[CHN][VeryCD] Jacooob", "eMule v0.50a", 0, "国家地理.伟大工程巡礼.超级油轮.National.Geographic.MegaStructures.Supertanker.HDTV.MiniSD-TLF.mkv", "2.4 KB/s", "5.74 MB", "2:40 分钟", "22:22 分钟", 77, "224.11 MB", "ddd.ddd.d.d.d.ddddddddddddddddd.dddddyddddddddd.d"],
    ["emule", "hr", "Guomenghr", "eMule v0.50a", 1, "[蓝色星球]BBC.The.Blue.Planet.COMPLETE.SERiES.2001.iNTERNAL.TRiAUDiO.DVDRiP.X264-KiSS-cd1.mkv", "20.8 KB/s", "78.85 MB", "1 秒 (LowID)", "56:04 分钟", 31, "431.25 MB", "d.de.m...m..m..dd.y.mh.d.m.d.d.eg.e.d.dhd.dhhhhdd"],
    ["emule", "ca", "http://emule-project.net", "eMule v0.50a", 0, "【6v电影www.dy131.com】魔术师BD中法双字1024高清.mkv", "22.4 KB/s", "109.37...", "0 秒", "1:05 小时", 28, "450.68 MB", "y.m.g.mgm.h.mhmgem.m.d.dh.d.m.ge.dmgdm.h.me.m..m."],
    ["emule", "kr", "http://emule-project.net", "eMule v0.50a", 0, "桃色.Colour.Blossoms.2004.KORSUB.720p.HDRip.x264-NowYS.mkv", "14.5 KB/s", "212.16...", "0 秒", "1:01 小时", 4, "324.44 MB", "..e.e.gm.......m.........m....m.m....m..h.m...y.."],
    ["emule", "jp", "http://emule-project.net", "eMule v0.50a", 1, "女性：X爱满意度.Women.Sexual.Satisfaction.2017.HD720P.X264.AAC.Korean.CHS.mp4", "23.3 KB/s", "155.89...", "0 秒 (LowID)", "1:00 小时", 65, "484.21 MB", "dd.md.dhddhddd.e.hddd.dhddmd.ddhdd.ddddghdghdhddd"],
    ["emule", "au", "http://emule-project.net", "eMule v0.50a", 0, "metartx.17.06.16.lena.anderson.time.on.your.hands.mp4", "19.1 KB/s", "56.92 MB", "1 秒", "57:35 分钟", 32, "112.26 MB", "d....d.gh..d...ddhg...dh.dd.dhd...d..d.m...dgd.dd"],
    ["emule", "es", "http://emule-project.net", "eMule v0.50a", 0, "彼女の姉貴とイケナイ関係 -Rio(中文字幕).avi", "9.9 KB/s", "44.20 MB", "2 秒", "40:13 分钟", 17, "44.20 MB", ".m.m..m.mm..m.m...m..m..m..m.m....m...h...m..m..."],
    ["emule", "br", "http://emule-project.net", "eMule v0.50a", 1, "metartx.17.06.16.lena.anderson.time.on.your.hands.mp4", "14.0 KB/s", "18.53 MB", "29:03 分...", "13:23 分钟", 0, "23.34 MB", ".........e..g.y.................................."],
    ["emule", "it", "http://emule-project.net", "eMule v0.50a", 1, "塑料王国.mp4", "18.2 KB/s", "11.70 MB", "58:05 分...", "10:19 分钟", 16, "131.67 MB", ".m.m..m...m.m..m..m...m.mm.m.m...m..m...m..mm...."],
    ["emule", "kr", "http://emule-project.net", "eMule v0.50a", 0, "美丽的妈妈.2017.HD720P.X264.AAC.Korean.CHS.mp4", "4.4 KB/s", "4.08 MB", "58:04 分钟", "9:36 分钟", 0, "5.11 MB", "................................................."],
    ["emule", "tw", "http://emule-project.net", "eMule v0.50a", 1, "工作女郎.未删减.HD1280超清韩语中字.mp4", "25.4 KB/s", "23.53 MB", "32:36 分...", "9:28 分钟", 72, "820.82 MB", "dmdd.ddmdddmdddmd.d.ddddddddddd.dddddmdd.ddddmddm"],
    ["emule", "tw", "http://emule-project.net", "eMule v0.50a", 1, "[TVBT]Kyumei.Byoto.24.Ji_SP_01_ChineseSubbed.rmvb", "32.9 KB/s", "21.32 MB", "0 秒 (LowID)", "9:03 分钟", 0, "121.55 MB", "..gg...............................gg.......yy..."],
    ["emule", "us", "http://emule-project.net", "eMule v0.50a", 0, "雷霆战警.720p.国粤双语.BD中字.mkv", "17.5 KB/s", "10.79 MB", "29:01 分钟", "8:05 分钟", 89, "1.73 GB", "dddmddmdddhdddddd.ddddddddddddd.ddddhdddddddhddmd"],
    ["emule", "us", "http://emule-project.net", "eMule v0.50a", 1, "Top030.奇爱博士.Dr.Strangelove.1964.BDRip.MiniSD-TLF.mkv", "32.6 KB/s", "14.88 MB", "0 秒 (LowID)", "8:04 分钟", 43, "259.67 MB", "d...ddm.dy..dd..dddd.dh.ddd.dd.dd.....g.dd..dd..d"],
    ["emule", "it", "http://emule-project.net", "eMule v0.50a", 1, "amateurallure.17.01.12.lena.anderson.mp4", "7.8 KB/s", "2.38 MB", "29:02 分...", "7:22 分钟", 33, "34.28 MB", "m..m.d.m..m.m.m..d.m.m.m.dd.m.m...d..m.me..m.m.d."],
    ["emule", "cn", "Hxwarhead", "eMule v0.50a", 0, "CB.S03E01.720p.FIX字幕侠.mp4", "131.9 KB/s", "269.96...", "0 秒", "51:59 分钟", 0, "336.04 MB", "..ge.e.e.....e..g.ee....h..gg.ge.eg.g.e.g..ge.e.."],
    ["emule", "il", "VDown.co.il - הורדה מהירה מיוטיוב", "eMule v0.50a", 1, "[Blacked] Hadley Viscara - My Boyfriend Made Me Do It (14.07.2017) rq (2k).mp4", "20.5 KB/s", "11.08 MB", "1 秒 (LowID)", "8:42 分钟", 87, "111.50 MB", "dddddddddddd.dddddddddddddddddddd.ddhddd.ddddddd."],
    ["plain", "cn", "http://emule-project.net [&jf}]«CN-9 Build 331 BETA»", "eMule v0.50b [CHN 9.331]", 1, "我不是药神.Drug.Dealer.2018.HD720P.X264.AAC.Mandarin.CHS-ENG.mp4", "265.8 KB/s", "154.39...", "0 秒 (LowID)", "37:46 分钟", 7, "343.35 MB", "............e.m.g.e.................e....e.....e."],
    ["emule", "cn", "http://emule-project.net", "eMule v0.50b", 1, "彼女の姉貴とイケナイ関係 -Rio(中文字幕).avi", "17.6 KB/s", "6.20 MB", "1 秒 (LowID)", "3:51 分钟", 2, "6.20 MB", "...............m.....................m..e........"],
    ["emule", "tw", "https://emule-project.net", "eMule v0.51a", 1, "[SUBPIG][Papa katsu 01].mp4", "0 B/s", "228 KB", "29:01 分...", "1:28 分钟", 0, "65.47 MB", "................................................y"],
    ["emule", "tw", "https://www.emule-project.org", "eMule v0.51b", 0, "Code.Blue.S01E07.2008.720p.BluRay.x264-WiKi.mkv", "100.1 KB/s", "44.49 MB", "0 秒", "12:12 分钟", 68, "304.33 MB", "ddd.d.ed.m.dmddd.m.ddmd.dd.dmdh.d.mddm.mddd..ddd."],
    ["emule", "it", "sailorman", "eMule v0.51b", 0, "metartx.17.06.16.lena.anderson.time.on.your.hands.mp4", "9.9 KB/s", "12.96 MB", "29:00 分钟", "14:18 分钟", 30, "51.85 MB", "....m..m.g..ddd.d..m.ddd.hddd.hy.d.mdd..ddm.dd.dd"]
];

const colors = { ".": "#e2e2e2", d: "#646464", m: "#a6a6a6", g: "#0c8c10", e: "#a4d8a4", h: "#3a743a", y: "#dcc030" };

// escape the text and put Chinese / Japanese runs in their own span
function format(text) {
    return text
        .replace(/&/g, "&amp;")
        .replace(/</g, "&lt;")
        .replace(/[\u3000-\u9fff\uff00-\uffef]+/g, '<span class="cjk">$&</span>');
}

// every letter of the parts string is one slice of the bar
function partsGradient(parts) {
    const step = 100 / parts.length;
    const stops = [...parts].map((p, i) => `${colors[p]} ${(i * step).toFixed(2)}% ${((i + 1) * step).toFixed(2)}%`);
    return `linear-gradient(90deg, ${stops.join(", ")})`;
}

document.getElementById("uploads").innerHTML = uploads.map(u => {
    const [client, flag, user, soft, marked, file, speed, sent, waited, time, percent, total, parts] = u;
    return `<tr>
        <td class="user"><svg class="client"><use href="#c-${client}"/></svg><span class="flag"><svg><use href="#f-${flag}"/></svg></span><span>${format(user)}</span></td>
        <td>${marked ? `<mark>${soft}</mark>` : soft}</td>
        <td>${format(file)}</td>
        <td class="num">${speed}</td>
        <td class="num">${sent}</td>
        <td>${format(waited)}</td>
        <td>${format(time)}</td>
        <td><div class="bar" style="background-image: ${partsGradient(parts)}"><span>${percent}%</span></div></td>
        <td>${format(total + "/ 0 字节")}</td>
        <td>${format("传输中")}</td>
        <td></td>
    </tr>`;
}).join("");
```
